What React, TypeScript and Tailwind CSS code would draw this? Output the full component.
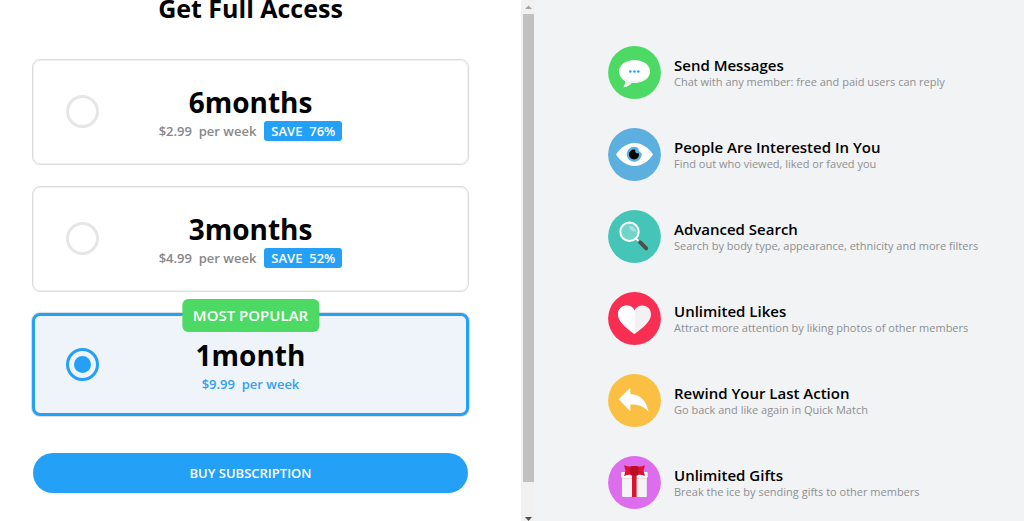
import { useState } from "react";
import type { ReactNode } from "react";
import clsx from "clsx";

const plans = [
  { id: "6", period: "6months", price: "$2.99", save: "76%", popular: false },
  { id: "3", period: "3months", price: "$4.99", save: "52%", popular: false },
  { id: "1", period: "1month", price: "$9.99", save: "", popular: true },
];

type IconProps = {
  color: string;
  children: ReactNode;
};

const Icon = ({ color, children }: IconProps) => (
  <svg
    viewBox="0 0 53 53"
    className="size-[53px] shrink-0"
    aria-hidden="true"
  >
    <circle cx="26.5" cy="26.5" r="26.4" fill={color} />
    {children}
  </svg>
);

const MessageIcon = () => (
  <Icon color="#4cd964">
    <path
      d="M26.5 14C18 14 11 19 11 25.4c0 4.1 2.6 7.6 6.4 9.6-.1 2.2-.7 4.2-1.9 6.3 3.5-.6 6.3-2.2 8.3-4.6 10.1.9 18.3-4.2 18.3-11.3 0-6.4-6.9-11.4-15.6-11.4z"
      fill="#fff"
    />
    <path
      d="M13 31.1c1 1.6 2.5 2.9 4.4 3.9-.1 2.2-.7 4.2-1.9 6.3 3.5-.6 6.3-2.2 8.3-4.6 7.4.6 14-2 16.8-6.1-3.6 3-8.6 4.2-14 4.2-5.300 0-10.200-1.200-13.600-3.700z"
      fill="#f0f0f0"
    />
    <circle cx="22.3" cy="25.5" r="1.3" fill="#24a1f7" />
    <circle cx="26.3" cy="25.5" r="1.3" fill="#24a1f7" />
    <circle cx="30.3" cy="25.5" r="1.3" fill="#24a1f7" />
  </Icon>
);

const EyeIcon = () => (
  <Icon color="#5dafdf">
    <path
      d="M8 26.5C13 19 19.5 15 26.500 15S40 19 45 26.500C40 34 33.500 38 26.500 38S13 34 8 26.500z"
      fill="#fff"
    />
    <circle cx="26.2" cy="26.3" r="7.5" fill="#5dafdf" />
    <circle cx="26" cy="26.5" r="5" fill="#000" />
    <path d="M29.500 19.300l4.500 5.200h-3z" fill="#fff" />
    <circle cx="29.800" cy="22.700" r="2.600" fill="#5dafdf" />
    <path d="M30 18.500c2.200 1 3.700 2.800 4.300 5.500l-3.300-.6z" fill="#fff" />
  </Icon>
);

const SearchIcon = () => (
  <Icon color="#45c5b8">
    <path d="M27.8 28.3l5 5" stroke="#fff" strokeWidth="1.8" />
    <path d="M32 32.2l6.2 6.2" stroke="#4d4d4d" strokeWidth="3.8" strokeLinecap="round" />
    <circle cx="21.5" cy="21.7" r="9.2" fill="#72d3ca" stroke="#fff" strokeWidth="2" />
    <path d="M20.8 16.3c4.100-.6 6.600 1.500 7 5.400-3.400-.1-6.300-2-7-5.400z" fill="#a5e3dd" />
  </Icon>
);

const HeartIcon = () => (
  <Icon color="#f82f53">
    <path
      d="M26.500 42C18 35.500 10 29.700 10 22.200c0-5 3.800-8.700 8.500-8.700 3.600 0 6.500 1.800 8 4.800 1.500-3 4.400-4.800 8-4.800 4.700 0 8.500 3.700 8.500 8.700C43 29.700 35 35.500 26.500 42z"
      fill="#f2f2f2"
    />
    <path
      d="M26.500 42C18 35.500 10 29.700 10 22.200c0-5 3.800-8.700 8.500-8.700 3.600 0 6.500 1.800 8 4.800z"
      fill="#fff"
    />
  </Icon>
);

const RewindIcon = () => (
  <Icon color="#fbbf43">
    <path
      d="M10.5 25.3L22.3 13.7v6.200c10.200.8 16.200 6.800 18.300 17.800-4.800-5.300-10.700-7.700-18.300-7.200v6.700z"
      fill="#fff"
    />
  </Icon>
);

const GiftIcon = () => (
  <Icon color="#dc6eee">
    <rect x="14" y="20" width="24.800" height="21" rx="1" fill="#f4f4f4" />
    <path d="M14 21.500h24.800v1.500H14z" fill="#dedede" />
    <rect x="13" y="16" width="26.600" height="5.800" rx="1" fill="#fff" />
    <path d="M24 16h4.600v25H24z" fill="#dc1233" />
    <path
      d="M16 9.200c3.200 1.200 6 1.600 9 1.300h4c3 .3 5.200-.1 8-1.300l-1.500 5.600 1.500 5.200c-3.300-1.300-6-1.500-8-.8h-4.500c-2.700-.7-5.300-.5-8.500.8l1.500-5.200z"
      fill="#dc1233"
    />
    <rect x="22.300" y="10" width="8" height="9.500" rx="1.500" fill="#b80f25" />
  </Icon>
);

const features = [
  {
    icon: <MessageIcon />,
    title: "Send Messages",
    description: "Chat with any member: free and paid users can reply",
  },
  {
    icon: <EyeIcon />,
    title: "People Are Interested In You",
    description: "Find out who viewed, liked or faved you",
  },
  {
    icon: <SearchIcon />,
    title: "Advanced Search",
    description: "Search by body type, appearance, ethnicity and more filters",
  },
  {
    icon: <HeartIcon />,
    title: "Unlimited Likes",
    description: "Attract more attention by liking photos of other members",
  },
  {
    icon: <RewindIcon />,
    title: "Rewind Your Last Action",
    description: "Go back and like again in Quick Match",
  },
  {
    icon: <GiftIcon />,
    title: "Unlimited Gifts",
    description: "Break the ice by sending gifts to other members",
  },
];

const ScrollTrack = () => (
  <div className="flex w-[13px] shrink-0 flex-col items-center bg-[#f1f1f1]" aria-hidden="true">
    <svg viewBox="0 0 13 14" className="h-[14px] w-[13px]">
      <path d="M4 9h7L7.5 5.5z" fill="#a3a3a3" />
    </svg>
    <div className="ml-px w-[11px] flex-1 bg-[#c1c1c1]" />
    <div className="h-[25px]" />
    <svg viewBox="0 0 13 14" className="h-[14px] w-[13px]">
      <path d="M4 10h7l-3.5 4z" fill="#505050" />
    </svg>
  </div>
);

export default function App() {
  const [selected, setSelected] = useState("1");

  return (
    <main className="grid min-h-screen grid-cols-[534fr_490fr] overflow-hidden bg-white font-['Open_Sans','Noto_Sans',sans-serif] text-black">
      <div className="flex">
        <form className="-mt-2 flex-1 pr-[52px] pl-8" onSubmit={(e) => e.preventDefault()}>
          <h1 className="text-center text-[25px] leading-8 font-bold">Get Full Access</h1>
          <div className="mt-[35px] flex flex-col gap-[21px]">
            {plans.map((plan) => {
              const active = plan.id === selected;
              return (
                <label
                  key={plan.id}
                  className={clsx(
                    "relative grid cursor-pointer grid-cols-[33px_1fr_33px] items-center rounded-lg",
                    active
                      ? "h-[103px] border-3 border-[#24a1f7] bg-[#eef4f9] px-[31px] shadow-[0_0_1px_1px_#d8dcdf]"
                      : "h-[106px] border border-[#dcdcdd] px-[33px] pb-px shadow-[inset_0_0_1px_1px_#f0f0f0]"
                  )}
                >
                  {plan.popular && (
                    <span className="absolute -top-[17px] left-1/2 -translate-x-1/2 rounded-md bg-[#4cd964] px-[11px] text-[15px] leading-[33px] font-semibold whitespace-nowrap text-white">
                      MOST POPULAR
                    </span>
                  )}
                  <input
                    type="radio"
                    name="plan"
                    value={plan.id}
                    checked={active}
                    onChange={() => setSelected(plan.id)}
                    className="grid size-[33px] appearance-none place-items-center rounded-full border-3 border-[#e4e6e7] before:size-[17px] before:rounded-full checked:border-[#24a1f7] checked:before:bg-[#24a1f7]"
                  />
                  <span className="flex flex-col items-center gap-px pt-px">
                    <span className="text-[28px] leading-9 font-bold">{plan.period}</span>
                    <span
                      className={clsx(
                        "flex text-[13px] leading-5 font-semibold whitespace-pre",
                        active ? "text-[#359ff0]" : "text-[#87888a]"
                      )}
                    >
                      {plan.price}{"  "}per week
                      {plan.save && (
                        <span className="ml-2 rounded-[3px] bg-[#24a1f7] px-[7px] text-white">
                          SAVE{"  "}{plan.save}
                        </span>
                      )}
                    </span>
                  </span>
                </label>
              );
            })}
          </div>
          <div className="px-px pt-[37px]">
            <button
              type="submit"
              className="h-10 w-full cursor-pointer rounded-full bg-[#24a1f7] pt-0.5 text-[13px] font-semibold text-white"
            >
              BUY SUBSCRIPTION
            </button>
          </div>
        </form>
        <ScrollTrack />
      </div>
      <ul className="flex flex-col gap-[29px] bg-[#f1f3f5] pt-[46px] pl-[74px]">
        {features.map((item) => (
          <li key={item.title} className="flex items-center gap-[13px]">
            {item.icon}
            <div className="pt-px">
              <h2 className="text-[15px] leading-[18px] font-semibold">{item.title}</h2>
              <p className="text-[11px] leading-4 text-[#8e8f91]">{item.description}</p>
            </div>
          </li>
        ))}
      </ul>
    </main>
  );
}
